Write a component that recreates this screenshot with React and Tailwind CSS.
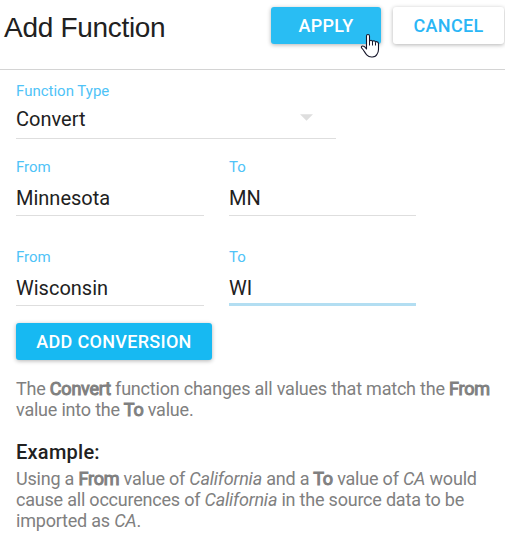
function Field({ label, value, focused }) {
  return (
    <label className="flex h-[58px] flex-col">
      <span className="h-[28px] text-[15px] leading-[18px] text-[#4fc3f7]">{label}</span>
      <span
        className={
          focused
            ? "h-[30px] border-b-[3px] border-[#b3def2] text-[20px] leading-[24px]"
            : "h-[30px] border-b border-[#dedede] text-[20px] leading-[24px]"
        }
      >
        {value}
      </span>
    </label>
  );
}

function Strong({ children }) {
  return <b className="font-normal [-webkit-text-stroke:1px_#808080]">{children}</b>;
}

function Cursor() {
  return (
    <svg className="absolute left-[89px] top-[26px]" width="20" height="26" viewBox="0 0 20 26">
      <path
        d="M6.500 16V3Q6.500 1.500 8 1.500T9.500 3V8.500Q9.800 7.200 11 7.200T12.500 8.700Q13 7.700 14 7.800T15.500 9.300Q16 8.500 17 8.700T18.500 10.300V16.500Q18.500 19 17 21.200C15.500 24.500 9.500 24.900 7 22.200C5 20.200 4 17.200 2 15.400C.7 14.200 1.500 12.800 3 13Q4.500 13.100 6.500 16Z"
        fill="white"
        stroke="#17172b"
        strokeWidth="1.1"
        strokeLinejoin="round"
      />
      <path d="M9.500 8V12.500M12.500 8.500V12.500M15.500 9.500V12.500" stroke="#17172b" strokeWidth="1" />
    </svg>
  );
}

export default function App() {
  return (
    <div className="h-[533px] w-[505px] overflow-hidden bg-white font-['Roboto',sans-serif] text-[#212121]">
      <header className="flex h-[70px] items-start border-b border-[#d4d4d4] pl-[4px] pt-[7px]">
        <h1 className="w-[267px] whitespace-nowrap pt-[5px] font-['Liberation_Sans',sans-serif] text-[28px] leading-[32px] tracking-[-0.3px]">
          Add Function
        </h1>
        <button className="relative h-[37px] w-[110px] rounded-[3px] bg-[#29bdf3] text-[18px] font-medium leading-[37px] tracking-[0.3px] text-white shadow-[0_1px_4px_rgba(0,0,0,0.3)]">
          APPLY
          <Cursor />
        </button>
        <button className="ml-[12px] h-[37px] w-[111px] shrink-0 rounded-[3px] bg-white text-[18px] font-medium leading-[37px] tracking-[0.3px] text-[#29b6f6] shadow-[0_1px_4px_rgba(0,0,0,0.3)]">
          CANCEL
        </button>
      </header>
      <main className="px-[16px] pt-[12px]">
        <label className="flex h-[57px] w-[320px] flex-col border-b border-[#dedede]">
          <span className="h-[25px] text-[15px] leading-[18px] text-[#4fc3f7]">Function Type</span>
          <span className="flex justify-between pr-[23px] text-[20px] leading-[24px]">
            Convert
            <svg className="mt-[7px]" width="13" height="7" viewBox="0 0 13 7">
              <path d="M0 .3H13L6.500 6.800Z" fill="#dedede" />
            </svg>
          </span>
        </label>
        <div className="mt-[19px] grid grid-cols-[188px_187px] gap-x-[25px] gap-y-[32px]">
          <Field label="From" value="Minnesota" />
          <Field label="To" value="MN" />
          <Field label="From" value="Wisconsin" />
          <Field label="To" value="WI" focused />
        </div>
        <button className="mt-[17px] block h-[37px] w-[196px] rounded-[3px] bg-[#17b9f2] text-[18px] font-medium leading-[37px] tracking-[0.3px] text-white shadow-[0_1px_4px_rgba(0,0,0,0.3)]">
          ADD CONVERSION
        </button>
        <p className="mt-[18px] whitespace-nowrap text-[18px] leading-[21px] tracking-[-0.21px] text-[#808080]">
          The <Strong>Convert</Strong> function changes all values that match the <Strong>From</Strong>
          <br />
          value into the <Strong>To</Strong> value.
        </p>
        <h2 className="mt-[20px] text-[20px] font-medium leading-[24px] tracking-[0.25px]">Example:</h2>
        <p className="mt-[4px] whitespace-nowrap text-[18px] leading-[21px] tracking-[-0.21px] text-[#808080]">
          Using a <Strong>From</Strong> value of <i>California</i> and a <Strong>To</Strong> value of <i>CA</i> would
          <br />
          cause all occurences of <i>California</i> in the source data to be
          <br />
          imported as <i>CA</i>.
        </p>
      </main>
    </div>
  );
}
